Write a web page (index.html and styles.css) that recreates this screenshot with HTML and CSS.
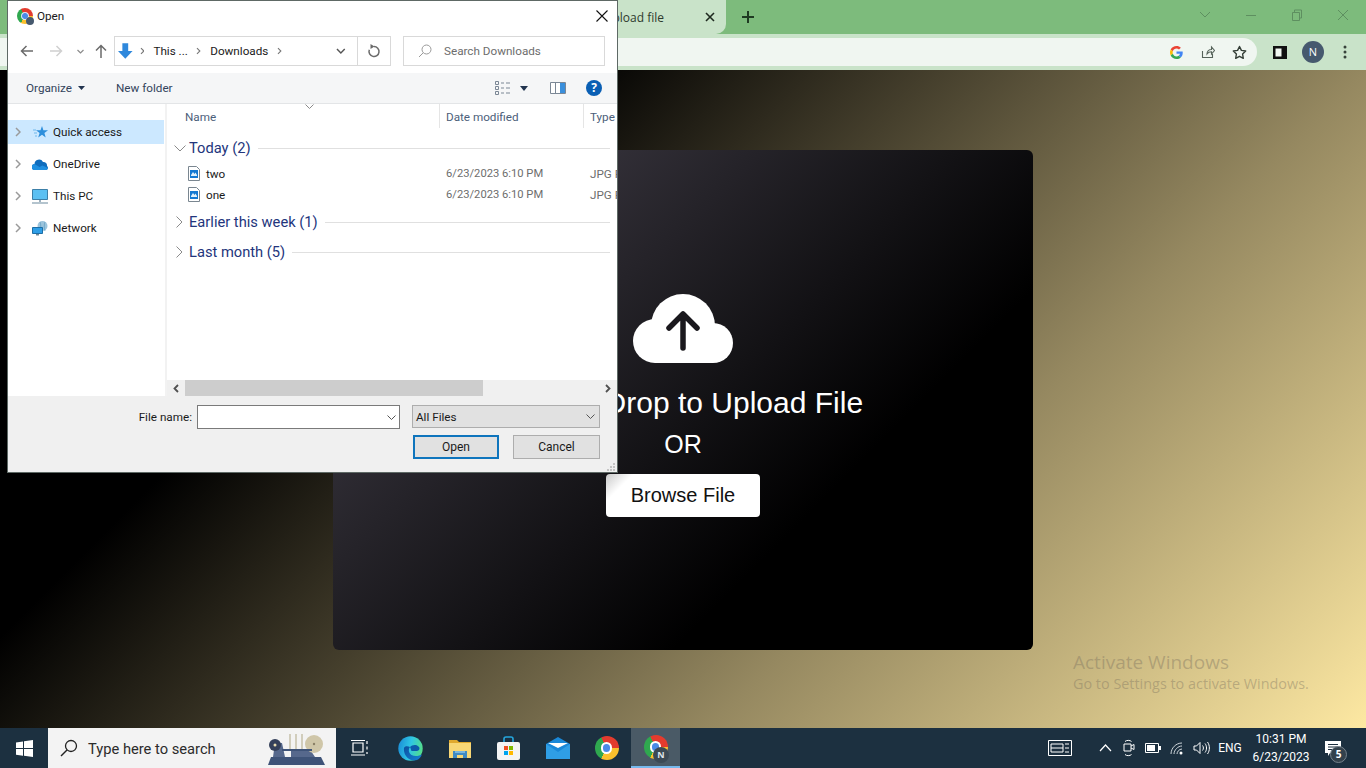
FILE: index.html
```html
<!DOCTYPE html>
<html lang="en">
<head>
<meta charset="utf-8">
<title>Upload file</title>
<link rel="stylesheet" href="styles.css">
</head>
<body>
<div class="screen">
  <header class="tabstrip">
    <div class="tab">
      <span class="tab-title">Upload file</span>
      <svg class="tab-close" width="10" height="10" viewBox="0 0 10 10"><path d="M1 1l8 8M9 1l-8 8" stroke="#1f2a20" stroke-width="1.600"/></svg>
    </div>
    <svg class="new-tab" width="14" height="14" viewBox="0 0 14 14"><path d="M7 1v12M1 7h12" stroke="#1f3a22" stroke-width="2"/></svg>
    <div class="win-controls">
      <svg width="46" height="12" viewBox="0 0 46 12"><path d="M18 3l5 5 5-5" fill="none" stroke="#5e8f60" stroke-width="1"/></svg>
      <svg width="46" height="12" viewBox="0 0 46 12"><path d="M18 6.500h10" stroke="#5e8f60" stroke-width="1"/></svg>
      <svg width="46" height="12" viewBox="0 0 46 12"><path d="M18.500 3.500h7v8h-7zM20.500 3.500v-2.500h7v8h-2" fill="none" stroke="#5e8f60" stroke-width="1"/></svg>
      <svg width="46" height="12" viewBox="0 0 46 12"><path d="M18 1l10 10M28 1L18 11" stroke="#5e8f60" stroke-width="1"/></svg>
    </div>
  </header>
  <div class="toolbar">
    <div class="addressbar">
      <svg class="tool-g" width="13" height="13" viewBox="0 0 48 48">
        <path fill="#EA4335" d="M24 9.500c3.540 0 6.710 1.220 9.210 3.600l6.850-6.850C35.900 2.380 30.470 0 24 0 14.620 0 6.510 5.380 2.560 13.220l7.980 6.190C12.430 13.720 17.740 9.500 24 9.500z"/>
        <path fill="#4285F4" d="M46.980 24.550c0-1.570-.15-3.090-.38-4.550H24v9.020h12.940c-.58 2.960-2.260 5.480-4.780 7.180l7.730 6c4.510-4.180 7.090-10.360 7.090-17.650z"/>
        <path fill="#FBBC05" d="M10.530 28.590c-.48-1.450-.76-2.990-.76-4.590s.27-3.140.76-4.590l-7.980-6.190C.92 16.460 0 20.120 0 24c0 3.880.92 7.540 2.560 10.780l7.970-6.190z"/>
        <path fill="#34A853" d="M24 48c6.480 0 11.930-2.130 15.890-5.810l-7.730-6c-2.150 1.450-4.920 2.300-8.160 2.300-6.260 0-11.570-4.220-13.470-9.910l-7.980 6.190C6.510 42.620 14.620 48 24 48z"/>
      </svg>
      <svg class="tool-share" width="14" height="14" viewBox="0 0 14 14"><path d="M1.500 6v6.500h10V9M6 9c0-3 2-4.500 4.500-4.500V2l3 3.500-3 3.500V6.800C8.500 6.800 7 7.500 6 9z" fill="none" stroke="#55625a" stroke-width="1.100"/></svg>
      <svg class="tool-star" width="15" height="15" viewBox="0 0 15 15"><path d="M7.500 1.500l1.900 3.900 4.300.6-3.100 3 .7 4.300-3.800-2-3.800 2 .7-4.300-3.100-3 4.300-.6z" fill="none" stroke="#333d36" stroke-width="1.400" stroke-linejoin="round"/></svg>
    </div>
    <svg class="side-panel" width="14" height="13" viewBox="0 0 14 13"><path d="M0 0h14v13H0z" fill="#111"/><path d="M2.500 2.500h6v8h-6z" fill="#f2f8f2"/></svg>
    <div class="avatar">N</div>
    <svg class="menu-dots" width="4" height="14" viewBox="0 0 4 14"><circle cx="2" cy="2" r="1.500" fill="#37423a"/><circle cx="2" cy="7" r="1.500" fill="#37423a"/><circle cx="2" cy="12" r="1.500" fill="#37423a"/></svg>
  </div>

  <main class="page">
    <section class="card">
      <svg class="cloud" width="100" height="69" viewBox="0 0 100 69">
        <circle cx="50" cy="32" r="32" fill="#fff"/>
        <circle cx="22" cy="47" r="22" fill="#fff"/>
        <circle cx="80" cy="49" r="20" fill="#fff"/>
        <rect x="22" y="40" width="58" height="29" fill="#fff"/>
        <path d="M50 54V21M36 34l14-14 14 14" fill="none" stroke="#1a181d" stroke-width="5.500" stroke-linecap="round" stroke-linejoin="round"/>
      </svg>
      <h1 class="drop-title">Drag &amp; Drop to Upload File</h1>
      <p class="drop-or">OR</p>
      <button class="browse">Browse File</button>
    </section>
    <div class="watermark">
      <div class="wm-title">Activate Windows</div>
      <div class="wm-sub">Go to Settings to activate Windows.</div>
    </div>
  </main>

  <footer class="taskbar">
    <div class="start">
      <svg width="17" height="17" viewBox="0 0 17 17"><path d="M0 2.400l7-1v6.700H0zM8 1.300L17 0v8.100H8zM0 9h7v6.700l-7-1zM8 9h9v8l-9-1.300z" fill="#fff"/></svg>
    </div>
    <div class="searchbox">
      <svg width="20" height="20" viewBox="0 0 20 20"><circle cx="12" cy="8" r="5.500" fill="none" stroke="#222" stroke-width="1.300"/><path d="M8 12l-6 6" stroke="#222" stroke-width="1.500"/></svg>
      <span class="search-text">Type here to search</span>
      <svg class="search-art" width="60" height="34" viewBox="0 0 60 34">
        <path d="M2 33l3-8h50l4 8z" fill="#3e5378"/>
        <path d="M7 25l2-14h7l3 14zM25 25v-6h20l4 6z" fill="#56688c"/>
        <circle cx="9" cy="13" r="6" fill="#34405a"/><circle cx="9" cy="13" r="1.500" fill="#e8dcb0"/>
        <circle cx="48" cy="12" r="9" fill="#cfc6a8"/><circle cx="48" cy="12" r="1.200" fill="#8a7f66"/>
        <path d="M24 2v17M30 2v17M36 2v17" stroke="#c9c4ae" stroke-width="1.600"/>
        <path d="M16 18h30" stroke="#3e5378" stroke-width="2"/>
      </svg>
    </div>
    <div class="task-cell task-first">
      <svg width="18" height="16" viewBox="0 0 18 16"><path d="M2 3h10v9H2zM0 .500h14M0 15h14M16 1v3M16 6.500v3M16 12v2" fill="none" stroke="#fff" stroke-width="1.200"/></svg>
    </div>
    <div class="task-cell task-gap">
      <svg width="25" height="25" viewBox="0 0 25 25">
        <defs>
          <linearGradient id="edgeA" x1="0" y1="0.300" x2="1" y2="0.500"><stop offset="0" stop-color="#1b8fd8"/><stop offset="0.500" stop-color="#2fc6e4"/><stop offset="1" stop-color="#54de8a"/></linearGradient>
          <linearGradient id="edgeB" x1="0" y1="0" x2="1" y2="1"><stop offset="0" stop-color="#0b4f9e"/><stop offset="1" stop-color="#1684d6"/></linearGradient>
        </defs>
        <circle cx="12.500" cy="12.500" r="12.200" fill="url(#edgeA)"/>
        <path d="M6 12C5 20 12 25.500 18 24.300c3-.7 5-3 6-6-3 2-7.500 2.500-10.500 .7C10.500 17 10 13.500 12 11 9.500 9.500 6.500 10 6 12z" fill="url(#edgeB)"/>
        <path d="M12 11c2-2.500 7-3 9 0 1 1.500.5 4-3 4h-4.500c-.7-1.500-.7-2.800-1.500-4z" fill="#0d5bab"/>
      </svg>
    </div>
    <div class="task-cell">
      <svg width="22" height="20" viewBox="0 0 22 20">
        <path d="M0 2h8l2 2h12v3H0z" fill="#e0a92e"/><path d="M0 5h22v15H0z" fill="#f8d775"/>
        <path d="M4 20v-7h14v7h-4v-3H8v3z" fill="#3f8ac4"/><path d="M6 13h10v2H6z" fill="#7ab6de"/>
      </svg>
    </div>
    <div class="task-cell">
      <svg width="23" height="24" viewBox="0 0 23 24">
        <path d="M7 7V3a2 2 0 012-2h5a2 2 0 012 2v4" fill="none" stroke="#25a5dc" stroke-width="1.600"/>
        <rect x="0" y="6" width="23" height="18" rx="2" fill="#f4f4f4"/>
        <rect x="7" y="10" width="4" height="4" fill="#f25022"/><rect x="12" y="10" width="4" height="4" fill="#7fba00"/>
        <rect x="7" y="15" width="4" height="4" fill="#00a4ef"/><rect x="12" y="15" width="4" height="4" fill="#ffb900"/>
      </svg>
    </div>
    <div class="task-cell">
      <svg width="24" height="22" viewBox="0 0 24 22">
        <path d="M0 7L12 0l12 7v15H0z" fill="#1a88d8"/><path d="M2 6h20L12 11z" fill="#fff"/><path d="M0 7v15h24V7L12 15z" fill="#2f9ee6"/>
      </svg>
    </div>
    <div class="task-cell"><span class="chrome chrome-lg"><span class="chrome-eye"></span></span></div>
    <div class="task-cell task-active">
      <span class="chrome chrome-lg"><span class="chrome-eye"></span></span>
      <span class="chrome-badge">N</span>
    </div>
    <div class="tray">
      <div class="tray-news">
        <svg width="24" height="16" viewBox="0 0 24 16"><path d="M.500.500h23v15H.500z" fill="none" stroke="#fff"/><path d="M3 4h12v8H3z" fill="none" stroke="#fff"/><path d="M3 8h12M17 4h4M17 8h4M17 12h4" stroke="#fff"/></svg>
      </div>
      <div class="tray-icon"><svg width="13" height="8" viewBox="0 0 13 8"><path d="M1 7l5.500-6L12 7" fill="none" stroke="#fff" stroke-width="1.200"/></svg></div>
      <div class="tray-icon"><svg width="12" height="18" viewBox="0 0 12 18"><path d="M1 5h7v7H1zM8 7l3-1.500v5L8 9M2 2.500c1.500-1.500 5-1.500 6.500 0M2 15.500c1.500 1.500 5 1.500 6.500 0" fill="none" stroke="#fff" stroke-width="1"/></svg></div>
      <div class="tray-icon"><svg width="16" height="10" viewBox="0 0 16 10"><path d="M.500.500h13v9H.500z" fill="none" stroke="#fff"/><path d="M2 2h8v6H2z" fill="#fff"/><path d="M14 3h2v4h-2z" fill="#fff"/></svg></div>
      <div class="tray-icon"><svg width="14" height="13" viewBox="0 0 14 13"><path d="M1 12C1 6 6 1 12 1M4 12c0-4 4-8 8-8M7 12c0-2 2-5 5-5" fill="none" stroke="#cfd6db" stroke-width="1"/><circle cx="11" cy="11" r="1.500" fill="#fff"/></svg></div>
      <div class="tray-icon"><svg width="17" height="14" viewBox="0 0 17 14"><path d="M1 5v4h2.500L7 12.500v-11L3.500 5z" fill="none" stroke="#fff"/><path d="M9.500 4.500c1.200 1.500 1.200 3.500 0 5M12 2.500c2 2.500 2 6.500 0 9M14.500 1c2.500 3.500 2.500 8.500 0 12" fill="none" stroke="#fff"/></svg></div>
      <div class="tray-lang">ENG</div>
      <div class="tray-clock"><div>10:31 PM</div><div>6/23/2023</div></div>
      <div class="tray-notify">
        <svg width="16" height="15" viewBox="0 0 16 15"><path d="M0 0h16v12H5l-2 3v-3H0z" fill="#fff"/><path d="M3 3.500h10M3 6h10M3 8.500h7" stroke="#1c2f3f"/></svg>
        <span class="notify-badge">5</span>
      </div>
    </div>
  </footer>

  <div class="dialog">
    <div class="dlg-title">
      <span class="chrome chrome-sm"><span class="chrome-eye"></span><span class="chrome-mini"></span></span>
      <span class="dlg-title-text">Open</span>
      <svg class="dlg-close" width="12" height="12" viewBox="0 0 12 12"><path d="M.500.500l11 11M11.500.500l-11 11" stroke="#111" stroke-width="1.100"/></svg>
    </div>
    <div class="dlg-nav">
      <svg class="nav-back" width="13" height="12" viewBox="0 0 13 12"><path d="M13 6H1.500M6.500 1l-5 5 5 5" fill="none" stroke="#6b6b6b" stroke-width="1.500"/></svg>
      <svg class="nav-fwd" width="13" height="12" viewBox="0 0 13 12"><path d="M0 6h11.500M6.500 1l5 5-5 5" fill="none" stroke="#d0d0d0" stroke-width="1.500"/></svg>
      <svg class="nav-drop" width="7" height="5" viewBox="0 0 7 5"><path d="M.500 1l3 3 3-3" fill="none" stroke="#8b8b8b" stroke-width="1.200"/></svg>
      <svg class="nav-up" width="12" height="14" viewBox="0 0 12 14"><path d="M6 14V1.500M1 6.500l5-5 5 5" fill="none" stroke="#6b6b6b" stroke-width="1.500"/></svg>
      <div class="addr">
        <svg class="addr-arrow" width="15" height="16" viewBox="0 0 15 16"><path d="M4.500 0h6v8H15l-7.500 8L0 8h4.500z" fill="#2f88dc"/></svg>
        <svg class="crumb-sep sep-1" width="5" height="8" viewBox="0 0 5 8"><path d="M1 1l3 3-3 3" fill="none" stroke="#777" stroke-width="1.100"/></svg>
        <span class="crumb crumb-1">This ...</span>
        <svg class="crumb-sep sep-2" width="5" height="8" viewBox="0 0 5 8"><path d="M1 1l3 3-3 3" fill="none" stroke="#777" stroke-width="1.100"/></svg>
        <span class="crumb crumb-2">Downloads</span>
        <svg class="crumb-sep sep-3" width="5" height="8" viewBox="0 0 5 8"><path d="M1 1l3 3-3 3" fill="none" stroke="#777" stroke-width="1.100"/></svg>
        <svg class="addr-drop" width="10" height="6" viewBox="0 0 10 6"><path d="M1 1l4 4 4-4" fill="none" stroke="#555" stroke-width="1.500"/></svg>
        <div class="addr-refresh">
          <svg width="14" height="14" viewBox="0 0 14 14"><path d="M7 2.500a5 5 0 11-4.700 3.300" fill="none" stroke="#6b6b6b" stroke-width="1.500"/><path d="M3.500 0l4 2.500-4 2.500z" fill="#6b6b6b"/></svg>
        </div>
      </div>
      <div class="search">
        <svg width="14" height="14" viewBox="0 0 14 14"><circle cx="8.500" cy="5.500" r="4.500" fill="none" stroke="#9a9a9a"/><path d="M5.200 8.800L1 13" stroke="#9a9a9a"/></svg>
        <span class="search-label">Search Downloads</span>
      </div>
    </div>
    <div class="dlg-tools">
      <span class="tool-text">Organize</span>
      <svg class="tool-caret" width="7" height="4" viewBox="0 0 7 4"><path d="M0 0h7L3.500 4z" fill="#22344f"/></svg>
      <span class="tool-text tool-newfolder">New folder</span>
      <svg class="tool-views" width="16" height="14" viewBox="0 0 16 14"><path d="M.500.500h3v3h-3zM.500 5.500h3v3h-3zM.500 10.500h3v3h-3z" fill="none" stroke="#7b8795"/><path d="M6 2h3M11 2h4M6 7h3M11 7h4M6 12h3M11 12h4" stroke="#7b8795"/></svg>
      <svg class="tool-viewcaret" width="8" height="5" viewBox="0 0 8 5"><path d="M0 0h8L4 5z" fill="#22344f"/></svg>
      <svg class="tool-pane" width="16" height="12" viewBox="0 0 16 12"><path d="M.500.500h15v11H.500z" fill="#fff" stroke="#7b8795"/><path d="M5.500 0v12" stroke="#7b8795"/><path d="M10 1h5v10h-5z" fill="#3a8fdc"/></svg>
      <span class="tool-help">?</span>
    </div>
    <div class="dlg-main">
      <nav class="sidebar">
        <div class="side-row side-selected">
          <svg class="side-chev" width="6" height="10" viewBox="0 0 6 10"><path d="M1 1l4 4-4 4" fill="none" stroke="#9a9a9a" stroke-width="1.500"/></svg>
          <svg class="side-icon" width="16" height="15" viewBox="0 0 16 15"><path d="M10 1l1.400 4.200H16l-3.600 2.700 1.300 4.600-3.700-2.800-3.800 2.800 1.400-4.600L4 5.200h4.500z" fill="#2e8fdc"/><path d="M1 5h3M2 8h3M3 11h2" stroke="#6fb8ec"/></svg>
          <span class="side-label">Quick access</span>
        </div>
        <div class="side-row">
          <svg class="side-chev" width="6" height="10" viewBox="0 0 6 10"><path d="M1 1l4 4-4 4" fill="none" stroke="#9a9a9a" stroke-width="1.500"/></svg>
          <svg class="side-icon" width="16" height="11" viewBox="0 0 16 11"><path d="M3 11a3 3 0 01-.5-6A4.500 4.500 0 0111 3a3.500 3.500 0 014 4 2.200 2.200 0 01-1 4z" fill="#0f6cbd"/><path d="M3 11a3 3 0 01-.5-6l5 3 3-1.500L16 9c-.3 1.200-1 2-2 2z" fill="#1f8fe0"/></svg>
          <span class="side-label">OneDrive</span>
        </div>
        <div class="side-row">
          <svg class="side-chev" width="6" height="10" viewBox="0 0 6 10"><path d="M1 1l4 4-4 4" fill="none" stroke="#9a9a9a" stroke-width="1.500"/></svg>
          <svg class="side-icon" width="16" height="15" viewBox="0 0 16 15"><path d="M.500.500h15v10H.500z" fill="#5cc0f2" stroke="#3c7fa8"/><path d="M7 11h2v2H7z" fill="#9bb0be"/><path d="M0 14h16" stroke="#9bb0be" stroke-width="1.500"/></svg>
          <span class="side-label">This PC</span>
        </div>
        <div class="side-row">
          <svg class="side-chev" width="6" height="10" viewBox="0 0 6 10"><path d="M1 1l4 4-4 4" fill="none" stroke="#9a9a9a" stroke-width="1.500"/></svg>
          <svg class="side-icon" width="16" height="15" viewBox="0 0 16 15"><circle cx="10.500" cy="5" r="5" fill="#9cc4dc"/><path d="M8 1c1 2 1 6 0 9M13 1c-1 2-1 6 0 9" fill="none" stroke="#5f9cc0" stroke-width=".7"/><path d="M.500 6.500h10v6H.500z" fill="#2f9ee6" stroke="#1d6ea6"/><path d="M4 13h3v1.500H4z" fill="#6d8796"/></svg>
          <span class="side-label">Network</span>
        </div>
      </nav>
      <div class="content">
        <div class="cols">
          <span class="col col-name">Name</span>
          <span class="col col-date">Date modified</span>
          <span class="col col-type">Type</span>
          <svg class="sort-mark" width="9" height="5" viewBox="0 0 9 5"><path d="M.500.500l4 4 4-4" fill="none" stroke="#8a8a8a"/></svg>
        </div>
        <div class="list">
          <div class="group">
            <svg class="group-chev" width="12" height="7" viewBox="0 0 12 7"><path d="M.500.500l5.500 5.500 5.500-5.500" fill="none" stroke="#8a8a8a"/></svg>
            <span class="group-label">Today (2)</span><span class="group-line"></span>
          </div>
          <div class="file file-first">
            <span class="file-name">
              <svg class="file-icon" width="12" height="15" viewBox="0 0 12 15"><path d="M.500.500h8l3 3v11H.500z" fill="#fff" stroke="#7a8690"/><path d="M2 4h8v8H2z" fill="#1479d2"/><path d="M3 9l2-3 1.500 2 1-1.500L9 9v1H3z" fill="#dff0fb"/></svg>
              two</span>
            <span class="file-date">6/23/2023 6:10 PM</span><span class="file-type">JPG File</span>
          </div>
          <div class="file">
            <span class="file-name">
              <svg class="file-icon" width="12" height="15" viewBox="0 0 12 15"><path d="M.500.500h8l3 3v11H.500z" fill="#fff" stroke="#7a8690"/><path d="M2 4h8v8H2z" fill="#1479d2"/><path d="M3 9l2-3 1.500 2 1-1.500L9 9v1H3z" fill="#dff0fb"/></svg>
              one</span>
            <span class="file-date">6/23/2023 6:10 PM</span><span class="file-type">JPG File</span>
          </div>
          <div class="group group-week">
            <svg class="group-chev-r" width="7" height="12" viewBox="0 0 7 12"><path d="M.500.500l5.500 5.500-5.500 5.500" fill="none" stroke="#8a8a8a"/></svg>
            <span class="group-label">Earlier this week (1)</span><span class="group-line"></span>
          </div>
          <div class="group group-month">
            <svg class="group-chev-r" width="7" height="12" viewBox="0 0 7 12"><path d="M.500.500l5.500 5.500-5.500 5.500" fill="none" stroke="#8a8a8a"/></svg>
            <span class="group-label">Last month (5)</span><span class="group-line"></span>
          </div>
        </div>
        <div class="hscroll">
          <span class="hs-btn"><svg width="6" height="9" viewBox="0 0 6 9"><path d="M5 1L1.500 4.500 5 8" fill="none" stroke="#505050" stroke-width="1.800"/></svg></span>
          <span class="hs-thumb"></span>
          <span class="hs-btn hs-right"><svg width="6" height="9" viewBox="0 0 6 9"><path d="M1 1l3.500 3.500L1 8" fill="none" stroke="#505050" stroke-width="1.800"/></svg></span>
        </div>
      </div>
    </div>
    <div class="dlg-foot">
      <div class="foot-row">
        <label class="foot-label">File name:</label>
        <div class="foot-input"><svg width="9" height="5" viewBox="0 0 9 5"><path d="M.500.500l4 4 4-4" fill="none" stroke="#555"/></svg></div>
        <div class="foot-select"><span>All Files</span><svg width="9" height="5" viewBox="0 0 9 5"><path d="M.500.500l4 4 4-4" fill="none" stroke="#555"/></svg></div>
      </div>
      <div class="foot-btns">
        <button class="dlg-btn dlg-btn-primary">Open</button>
        <button class="dlg-btn">Cancel</button>
      </div>
      <svg class="grip" width="8" height="8" viewBox="0 0 8 8"><path d="M6 0h2v2H6zM3 3h2v2H3zM6 3h2v2H6zM0 6h2v2H0zM3 6h2v2H3zM6 6h2v2H6z" fill="#c4c4c4"/></svg>
    </div>
  </div>
</div>
</body>
</html>
```

FILE: styles.css
```css
* { box-sizing: border-box; }
html, body { margin: 0; padding: 0; height: 100%; overflow: hidden; }
body { font-family: "Liberation Sans", Arial, sans-serif; }
.screen { position: relative; width: 1366px; height: 768px; display: flex; flex-direction: column; overflow: hidden; }

/* browser chrome */
.tabstrip { height: 34px; background: #7dbb7c; display: flex; align-items: center; flex: none; }
.tab { margin-left: 470px; width: 256px; height: 34px; background: #c9e3c9; border-radius: 0 0 10px 0; display: flex; align-items: center; justify-content: flex-end; padding-right: 11px; }
.tab-title { font: 12px "Open Sans", sans-serif; color: #2d3a2e; margin-right: 41px; }
.new-tab { margin-left: 15px; }
.win-controls { margin-left: auto; display: flex; width: 184px; margin-top: -4px; }
.toolbar { height: 36px; background: #c9e3c9; display: flex; align-items: center; flex: none; padding: 4px 0; }
.addressbar { width: 1257px; height: 28px; background: #f0f6f1; border-radius: 0 14px 14px 0; display: flex; align-items: center; justify-content: flex-end; padding-right: 10px; }
.tool-g { margin-right: 18px; }
.tool-share { margin-right: 17px; }
.side-panel { margin-left: 16px; }
.avatar { width: 22px; height: 22px; margin-left: 15px; border-radius: 50%; background: #46596e; color: #fff; font: 11px/22px "Open Sans", sans-serif; text-align: center; }
.menu-dots { margin-left: 19px; }

/* page */
.page { flex: 1; position: relative; min-height: 0; display: flex; justify-content: center; align-items: center; padding-top: 2px; background: linear-gradient(135deg, #000 0, #000 28%, #958860 67.500%, #fde8a2 100%); }
.card { width: 700px; height: 500px; border-radius: 6px; background: linear-gradient(135deg, #4a4652 0, #000 70%); display: flex; flex-direction: column; align-items: center; padding-top: 144px; color: #fff; flex: none; }
.cloud { flex: none; }
.drop-title { margin: 22px 0 0; font-size: 30px; line-height: 36px; font-weight: 400; white-space: nowrap; }
.drop-or { margin: 8px 0 0; font-size: 25px; line-height: 30px; }
.browse { margin-top: 15px; width: 154px; height: 43px; border: 0; border-radius: 4px; background: linear-gradient(135deg, #c9c9c9 0, #fff 14%); color: #111; font: 20px "Liberation Sans", Arial, sans-serif; padding: 0; }
.watermark { position: absolute; left: 1073px; top: 580px; color: rgba(125, 115, 95, .42); font-family: "Open Sans", sans-serif; }
.wm-title { font-size: 19px; line-height: 24px; }
.wm-sub { font-size: 14.400px; line-height: 20px; }

/* taskbar */
.taskbar { height: 40px; background: #1c3040; display: flex; align-items: center; flex: none; color: #fff; }
.start { width: 48px; height: 40px; display: flex; align-items: center; justify-content: center; }
.searchbox { width: 288px; height: 40px; background: #f3f3f3; display: flex; align-items: center; padding-left: 11px; position: relative; }
.search-text { margin-left: 9px; padding-top: 1px; font: 14.700px Roboto, sans-serif; color: #2b2b2b; white-space: nowrap; }
.search-art { margin-left: auto; margin-right: 10px; margin-top: 2px; }
.task-cell { width: 49px; height: 40px; display: flex; align-items: center; justify-content: center; position: relative; flex: none; }
.task-first { width: 48px; }
.task-gap { margin-left: 2px; }
.task-active { background: #4a5a66; border-bottom: 2px solid #76b9ed; }
.chrome { display: block; position: relative; border-radius: 50%; background: conic-gradient(from -30deg, #e33b2e 0 120deg, #fbc02d 120deg 240deg, #2fa84f 240deg 360deg); }
.chrome-lg { width: 24px; height: 24px; }
.chrome-sm { width: 16px; height: 16px; }
.chrome-eye { position: absolute; left: 27%; top: 27%; width: 46%; height: 46%; border-radius: 50%; background: #4a8be8; border: 2px solid #fff; }
.chrome-sm .chrome-eye { border-width: 1.500px; }
.chrome-mini { position: absolute; right: -1px; bottom: -1px; width: 8px; height: 8px; border-radius: 50%; background: #46596e; }
.chrome-badge { position: absolute; left: 22px; top: 19px; width: 16px; height: 16px; border-radius: 50%; background: #3c4a55; color: #dfe5ea; font: 700 9px/16px "Open Sans", sans-serif; text-align: center; }
.tray { margin-left: auto; display: flex; align-items: center; height: 40px; }
.tray-news { width: 44px; margin-right: 11px; display: flex; justify-content: center; }
.tray-icon { width: 24px; display: flex; justify-content: center; align-items: center; }
.tray-lang { width: 34px; text-align: center; font: 12px Roboto, sans-serif; }
.tray-clock { width: 68px; text-align: center; font: 12px/18px Roboto, sans-serif; }
.tray-notify { width: 51px; padding-left: 10px; position: relative; display: flex; align-items: center; height: 40px; }
.notify-badge { position: absolute; left: 15px; top: 18px; width: 17px; height: 17px; border-radius: 50%; background: #33414c; border: 1px solid #76828c; font: 700 10px/15px "Open Sans", sans-serif; text-align: center; }

/* dialog */
.dialog { position: absolute; left: 7px; top: 0; width: 611px; height: 473px; border: 1px solid rgba(40, 55, 50, .75); background: #fff; display: flex; flex-direction: column; font: 11.700px Roboto, sans-serif; color: #1a1a1a; overflow: hidden; }
.dlg-title { height: 35px; flex: none; display: flex; align-items: center; padding: 0 9px 5px 9px; }
.dlg-title-text { margin-left: 4px; }
.dlg-close { margin-left: auto; }
.dlg-nav { height: 30px; flex: none; display: flex; align-items: center; }
.nav-back { margin-left: 12px; }
.nav-fwd { margin-left: 17px; }
.nav-drop { margin-left: 14px; }
.nav-up { margin-left: 11px; }
.addr { margin-left: 7px; width: 277px; height: 30px; border: 1px solid #d9d9d9; display: flex; align-items: center; }
.addr-arrow { margin-left: 3px; }
.sep-1 { margin-left: 7px; }
.crumb-1 { margin-left: 9px; width: 36px; white-space: nowrap; }
.crumb { padding-bottom: 1px; }
.sep-2 { margin-left: 8px; }
.crumb-2 { margin-left: 9px; width: 61px; white-space: nowrap; }
.sep-3 { margin-left: 8px; }
.addr-drop { margin-left: 54px; }
.addr-refresh { margin-left: 11px; width: 34px; height: 28px; border-left: 1px solid #d9d9d9; display: flex; align-items: center; justify-content: center; }
.search { margin-left: 12px; width: 202px; height: 30px; border: 1px solid #d9d9d9; display: flex; align-items: center; padding-left: 14px; }
.search-label { margin-left: 12px; color: #6d6d6d; white-space: nowrap; padding-bottom: 1px; }
.dlg-tools { margin-top: 7px; height: 31px; flex: none; background: #f5f6f7; border-bottom: 1px solid #e3e5e7; display: flex; align-items: center; color: #33445c; }
.tool-text { white-space: nowrap; }
.dlg-tools > .tool-text:first-child { margin-left: 18px; }
.tool-caret { margin-left: 6px; }
.tool-newfolder { margin-left: 31px; }
.tool-views { margin-left: auto; }
.tool-viewcaret { margin-left: 9px; }
.tool-pane { margin-left: 22px; }
.tool-help { margin-left: 20px; margin-right: 15px; width: 16px; height: 16px; border-radius: 50%; background: #0a5fb4; color: #fff; font: 700 12px/16px "Open Sans", sans-serif; text-align: center; }
.dlg-main { height: 292px; flex: none; display: flex; }
.sidebar { width: 159px; flex: none; border-right: 2px solid #f2f2f2; padding-top: 16px; display: flex; flex-direction: column; gap: 8px; }
.side-row { width: 156px; height: 24px; display: flex; align-items: center; position: relative; white-space: nowrap; }
.side-selected { background: #cce8ff; }
.side-chev { margin-left: 7px; }
.side-icon { margin-left: 11px; }
.side-label { margin-left: 5px; }
.content { width: 450px; flex: none; display: flex; flex-direction: column; position: relative; overflow: hidden; }
.cols { height: 24px; flex: none; display: flex; align-items: center; color: #4c607a; position: relative; }
.col { height: 24px; line-height: 26px; white-space: nowrap; }
.col-name { width: 272px; padding-left: 18px; }
.col-date { width: 144px; padding-left: 6px; border-left: 1px solid #e5e5e5; }
.col-type { padding-left: 6px; border-left: 1px solid #e5e5e5; }
.sort-mark { position: absolute; left: 138px; top: 0; }
.list { flex: 1; min-height: 0; padding-top: 9px; }
.group { height: 22px; display: flex; align-items: center; padding-left: 7px; padding-right: 7px; color: #23357c; }
.group-chev { margin-right: 3px; flex: none; }
.group-chev-r { margin-left: 2px; margin-right: 6px; flex: none; }
.group-label { font-size: 14.700px; white-space: nowrap; }
.group-line { flex: 1; height: 1px; background: #e0e0e0; margin-left: 7px; }
.group-week { margin-top: 6px; }
.group-month { margin-top: 8px; }
.file { height: 21px; display: grid; grid-template-columns: 272px 144px 34px; align-items: center; white-space: nowrap; }
.file-first { margin-top: 4px; }
.file-name { padding-left: 21px; display: flex; align-items: center; }
.file-icon { margin-right: 6px; }
.file-date { padding-left: 7px; color: #6d6d6d; font-size: 11.200px; }
.file-type { padding-left: 7px; color: #6d6d6d; overflow: hidden; }
.hscroll { height: 16px; flex: none; background: #f0f0f0; display: flex; align-items: center; }
.hs-btn { width: 18px; height: 16px; display: flex; align-items: center; justify-content: center; }
.hs-thumb { width: 298px; height: 16px; background: #cdcdcd; }
.hs-right { margin-left: auto; }
.dlg-foot { flex: 1; background: #f0f0f0; padding-top: 9px; position: relative; }
.foot-row { display: flex; align-items: flex-start; }
.foot-label { width: 184px; text-align: right; line-height: 24px; margin-right: 5px; }
.foot-input { width: 203px; height: 24px; background: #fff; border: 1px solid #7a7a7a; display: flex; align-items: center; justify-content: flex-end; padding-right: 3px; }
.foot-select { margin-left: 12px; width: 188px; height: 23px; background: #e1e1e1; border: 1px solid #adadad; display: flex; align-items: center; justify-content: space-between; padding: 0 4px 0 3px; }
.foot-btns { display: flex; gap: 14px; justify-content: flex-end; padding-right: 17px; margin-top: 6px; }
.dlg-btn { width: 87px; height: 24px; background: #e1e1e1; border: 1px solid #adadad; font: 12px Roboto, sans-serif; color: #1a1a1a; padding: 0; }
.dlg-btn-primary { width: 86px; border: 2px solid #0f75bd; }
.grip { position: absolute; right: 2px; bottom: 1px; }
```
